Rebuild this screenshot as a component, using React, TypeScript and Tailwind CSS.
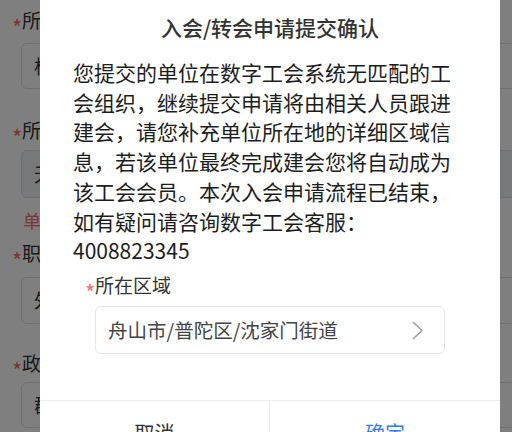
const font = "font-['Noto_Sans_CJK_SC','Noto_Sans',sans-serif]";

function Star({ className }: { className?: string }) {
  return (
    <span className={`relative top-[6px] w-[10px] text-[22px] leading-none ${className ?? ""}`}>*</span>
  );
}

function BgLabel({ text, className }: { text: string; className?: string }) {
  return (
    <div className={`flex h-[24px] items-center leading-[24px] ${className ?? ""}`}>
      <Star className="text-[#f56c6c]" />
      <span className="text-[19px] text-[#333]">{text}</span>
    </div>
  );
}

function BgInput({ value, disabled, className }: { value: string; disabled?: boolean; className?: string }) {
  return (
    <div
      className={`-mr-[40px] ml-[9px] flex items-center rounded-[6px] border border-[#dcdfe6] pl-[12px] text-[19px] text-[#333] ${
        disabled ? "bg-[#eef0f4]" : "bg-white"
      } ${className ?? ""}`}
    >
      {value}
    </div>
  );
}

export default function App() {
  return (
    <div className={`relative h-[432px] w-[512px] overflow-hidden bg-white ${font}`}>
      {/* page behind the dialog */}
      <div className="flex flex-col pl-[12px] pt-[8px]">
        <BgLabel text="所属地区" />
        <BgInput value="杭州市" className="mt-[11px] h-[46px]" />
        <BgLabel text="所在单位" className="mt-[29px]" />
        <BgInput value="无" disabled className="mt-[8px] h-[48px]" />
        <div className="mt-[10px] h-[24px] pl-[11px] text-[18px] leading-[24px] text-[#f56c6c]">单位未匹配</div>
        <BgLabel text="职业" className="mt-[9px]" />
        <BgInput value="外卖骑手" className="mt-[12px] h-[47px]" />
        <BgLabel text="政治面貌" className="mt-[27px]" />
        <BgInput value="群众" className="mt-[7px] h-[46px]" />
      </div>

      <div className="absolute inset-0 bg-black/50" />

      {/* dialog */}
      <div className="absolute left-[40px] top-0 w-[460px] bg-white">
        <div className="pt-[13px] text-center text-[21px] font-medium leading-[28px] text-[#333]">
          入会/转会申请提交确认
        </div>
        <p className="mt-[17px] px-[33px] text-[21px] leading-[29.7px] text-[#1d1d1d]">
          您提交的单位在数字工会系统无匹配的工会组织，继续提交申请将由相关人员跟进建会，请您补充单位所在地的详细区域信息，若该单位最终完成建会您将自动成为该工会会员。本次入会申请流程已结束，如有疑问请咨询数字工会客服：4008823345
        </p>
        <div className="mt-[6px] px-[55px]">
          <div className="flex h-[26px] items-center leading-[26px]">
            <Star className="-ml-[10px] text-[#f56c6c]" />
            <span className="text-[19px] text-[#333]">所在区域</span>
          </div>
          <div className="mt-[8px] flex h-[48px] items-center justify-between rounded-[6px] border border-[#e6e6e6] pl-[12px] pr-[20px]">
            <span className="text-[19.5px] text-[#444]">舟山市/普陀区/沈家门街道</span>
            <svg width="12" height="19" viewBox="0 0 12 19" fill="none" className="mt-[2px]">
              <polyline points="1.5,1.5 10,9.5 1.5,17.5" stroke="#a0a0a0" strokeWidth="1.7" strokeLinejoin="round" strokeLinecap="round" />
            </svg>
          </div>
        </div>
        <div className="mt-[46px] grid grid-cols-2 border-t border-[#ececec]">
          <button className="h-[64px] border-r border-[#ececec] text-[20px] text-[#333]">取消</button>
          <button className="h-[64px] text-[20px] text-[#2f7cf6]">确定</button>
        </div>
      </div>
    </div>
  );
}
